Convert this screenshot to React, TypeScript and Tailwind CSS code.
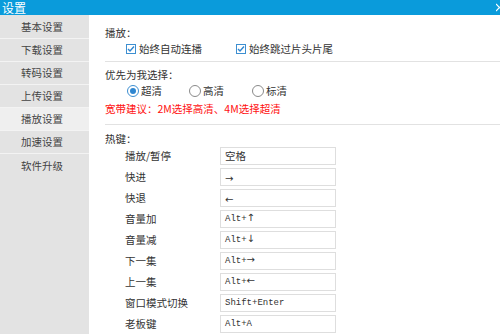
import React from "react";

const menu = ["基本设置", "下载设置", "转码设置", "上传设置", "播放设置", "加速设置", "软件升级"];

const hotkeys: { label: string; mod?: string; key: string; cjk?: boolean; arrow?: boolean }[] = [
  { label: "播放/暂停", key: "空格", cjk: true },
  { label: "快进", key: "→", arrow: true },
  { label: "快退", key: "←", arrow: true },
  { label: "音量加", mod: "Alt+", key: "↑", arrow: true },
  { label: "音量减", mod: "Alt+", key: "↓", arrow: true },
  { label: "下一集", mod: "Alt+", key: "→", arrow: true },
  { label: "上一集", mod: "Alt+", key: "←", arrow: true },
  { label: "窗口模式切换", key: "Shift+Enter" },
  { label: "老板键", key: "Alt+A" },
];

function Checkbox({ label }: { label: string }) {
  return (
    <div className="flex items-center gap-[3px]">
      <span className="w-[10px] h-[10px] border border-[#3d8fd1] bg-white flex items-center justify-center">
        <svg width="8" height="8" viewBox="0 0 8 8">
          <path d="M1 4 L3 6 L7 1.5" fill="none" stroke="#2f86d0" strokeWidth="1.4" />
        </svg>
      </span>
      <span>{label}</span>
    </div>
  );
}

function Radio({ label, checked }: { label: string; checked?: boolean }) {
  return (
    <div className="flex items-center gap-[2px]">
      <span
        className={`w-[12px] h-[12px] rounded-full border flex items-center justify-center bg-white ${
          checked ? "border-[#3d8fd1]" : "border-[#8a8a8a]"
        }`}
      >
        {checked && <span className="w-[6px] h-[6px] rounded-full bg-[#2f86d0]" />}
      </span>
      <span>{label}</span>
    </div>
  );
}

export default function App() {
  const font = { fontFamily: '"Noto Sans CJK SC", "Noto Sans", sans-serif' };
  const mono = { fontFamily: '"Liberation Mono", "DejaVu Sans Mono", monospace' };
  return (
    <div
      className="w-[500px] h-[334px] overflow-hidden flex flex-col bg-white text-[10.5px] text-[#333]"
      style={font}
    >
      <div className="h-[15px] bg-[#0a9bdb] flex items-center justify-between text-white pl-[2px]">
        <span className="leading-none text-[12px]">设置</span>
        <svg width="4" height="9" viewBox="0 0 4 9" className="shrink-0">
          <path d="M0 1 L4 5 M0 8 L4 4" stroke="white" strokeWidth="1.2" />
        </svg>
      </div>
      <div className="flex flex-1">
        <div className="w-[89px] bg-[#e3e3e3] pt-px">
          {menu.map((m, i) => (
            <div
              key={m}
              className={`h-[23px] flex items-center justify-center pr-[5px] text-[#444] ${
                i < 6 ? "border-b border-[#f3f3f3]" : ""
              } ${i === 4 ? "bg-[#efefef]" : ""}`}
            >
              {m}
            </div>
          ))}
        </div>
        <div className="flex-1 pl-[16px] pt-[10px]">
          <div className="h-[16px] flex items-center">播放：</div>
          <div className="h-[16px] flex items-center pl-[21px]">
            <div className="w-[110px]">
              <Checkbox label="始终自动连播" />
            </div>
            <Checkbox label="始终跳过片头片尾" />
          </div>
          <div className="mt-[4px] h-px bg-[#e2e2e2]" />
          <div className="mt-[5px] h-[16px] flex items-center">优先为我选择：</div>
          <div className="h-[16px] flex items-center pl-[22px]">
            <div className="w-[62px]">
              <Radio label="超清" checked />
            </div>
            <div className="w-[63px]">
              <Radio label="高清" />
            </div>
            <Radio label="标清" />
          </div>
          <div className="mt-[2px] h-[16px] flex items-center text-[#ff1010]">
            宽带建议：2M选择高清、4M选择超清
          </div>
          <div className="mt-[7px] h-px bg-[#e2e2e2]" />
          <div className="mt-[6px] h-[16px] flex items-center">热键：</div>
          <div className="flex flex-col gap-[3px]">
            {hotkeys.map((h) => (
              <div key={h.label} className="h-[18px] flex items-center">
                <div className="w-[115px] pl-[20px]">{h.label}</div>
                <div
                  className={`w-[116px] h-[18px] border border-[#dedede] flex items-center pl-[4px] text-[#333] ${
                    h.cjk ? "" : "text-[9px]"
                  }`}
                  style={h.cjk ? font : mono}
                >
                  {h.mod && <span className="leading-none">{h.mod}</span>}
                  {h.arrow ? (
                    <span
                      className={`text-[10px] leading-none ${h.mod ? "-translate-y-[1.5px]" : "translate-y-[2px]"}`}
                      style={{ fontFamily: '"DejaVu Sans", sans-serif' }}
                    >
                      {h.key}
                    </span>
                  ) : (
                    <span className="leading-none">{h.key}</span>
                  )}
                </div>
              </div>
            ))}
          </div>
        </div>
      </div>
    </div>
  );
}
